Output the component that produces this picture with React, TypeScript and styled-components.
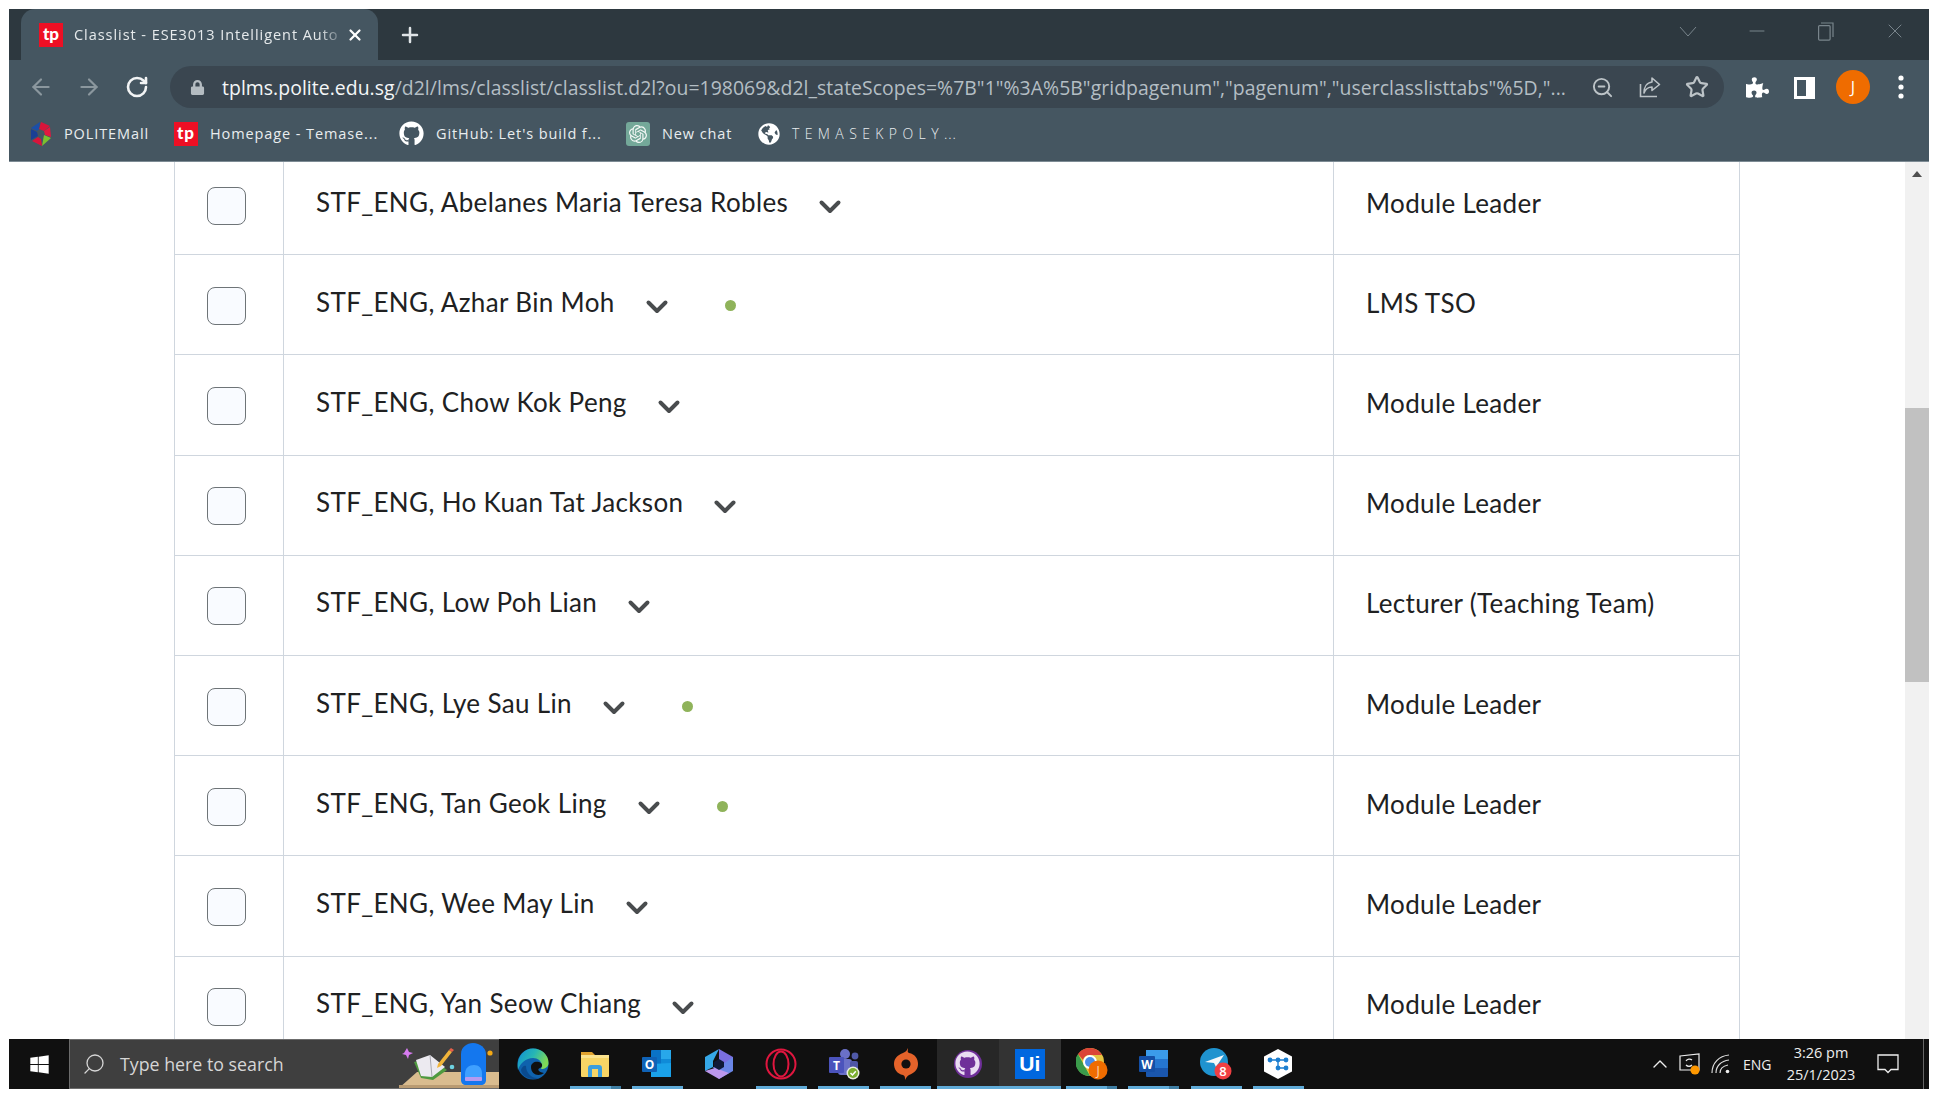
import React from 'react'
import styled, { createGlobalStyle } from 'styled-components'
import { ArrowLeft, ArrowRight, RotateCw, ZoomOut, Star, Search, ChevronUp, Plus, X, Minus } from 'lucide-react'
import { FaGithub, FaLock, FaPuzzlePiece, FaWindows, FaGlobeAmericas } from 'react-icons/fa'
import { SiOpenai } from 'react-icons/si'

const GlobalStyle = createGlobalStyle`
  html, body { margin: 0; padding: 0; background: #fff; overflow: hidden; }
  #root { padding: 9px; width: 1920px; height: 1080px; }
`

const Win = styled.div`
  width: 1920px;
  height: 1080px;
  display: flex;
  flex-direction: column;
  overflow: hidden;
  font-family: "Open Sans", "Liberation Sans", sans-serif;
`

const TitleBar = styled.div`
  height: 51px;
  flex-shrink: 0;
  background: #2d383f;
  display: flex;
  align-items: stretch;
  padding-left: 12px;
`
const Tab = styled.div`
  width: 357px;
  background: #455661;
  border-radius: 14px 14px 0 0;
  display: flex;
  align-items: center;
  padding: 0 14px 0 18px;
  box-sizing: border-box;
  color: #e6eaec;
`
const TabTitle = styled.span`
  flex: 1;
  margin-left: 11px;
  font-size: 14.5px;
  letter-spacing: 0.95px;
  white-space: nowrap;
  overflow: hidden;
  -webkit-mask-image: linear-gradient(to right, #000 90%, transparent 100%);
  mask-image: linear-gradient(to right, #000 90%, transparent 100%);
`
const NewTab = styled.div`
  width: 28px;
  margin-left: 18px;
  display: flex;
  align-items: center;
  justify-content: center;
  color: #dfe4e7;
`
const WindowControls = styled.div`
  margin-left: auto;
  display: flex;
  align-items: flex-start;
  color: #79858c;
`
const WindowControl = styled.div`
  width: 69px;
  height: 44px;
  display: flex;
  align-items: center;
  justify-content: center;
`

const AddressRow = styled.div`
  height: 48px;
  flex-shrink: 0;
  background: #455661;
  display: flex;
  align-items: center;
  padding: 6px 0 0 8px;
  box-sizing: border-box;
  color: #dfe4e7;
`
const NavButton = styled.div<{ $dim?: boolean }>`
  width: 48px;
  display: flex;
  justify-content: center;
  color: ${p => (p.$dim ? '#8b979e' : '#f2f4f5')};
`
const Omnibox = styled.div`
  margin-left: 9px;
  width: 1554px;
  height: 42px;
  flex-shrink: 0;
  border-radius: 21px;
  background: #3a4650;
  display: flex;
  align-items: center;
  padding-left: 20px;
  box-sizing: border-box;
  color: #b4bcc1;
`
const Url = styled.div`
  margin-left: 17px;
  width: 1357px;
  flex-shrink: 0;
  font-size: 19.4px;
  white-space: nowrap;
  color: #b4bec4;
  letter-spacing: 0.05px;
  b { font-weight: 400; color: #f4f6f7; }
`
const OmniIcon = styled.div`
  width: 47px;
  display: flex;
  justify-content: center;
  color: #bcc3c7;
`
const ToolIcon = styled.div`
  width: 48px;
  display: flex;
  justify-content: center;
  color: #fff;
`
const ExtensionSlot = styled(ToolIcon)`
  margin-left: 9px;
`
const Avatar = styled.div`
  width: 34px;
  height: 34px;
  border-radius: 50%;
  background: #ef6c00;
  color: #fff;
  font-size: 16px;
  display: flex;
  align-items: center;
  justify-content: center;
`

const BookmarkBar = styled.div`
  height: 54px;
  flex-shrink: 0;
  background: #455661;
  border-bottom: 1px solid #7d8b94;
  box-sizing: border-box;
  display: flex;
  align-items: center;
  padding: 0 0 2px 21px;
  color: #e9edef;
  font-size: 14.5px;
  letter-spacing: 0.9px;
`
const Bookmark = styled.div<{ $w: number }>`
  width: ${p => p.$w}px;
  display: flex;
  align-items: center;
  gap: 12px;
  white-space: nowrap;
  flex-shrink: 0;
`
const Spaced = styled.span`
  letter-spacing: 5.4px;
  font-size: 14px;
  font-weight: 300;
  i { font-style: normal; letter-spacing: 1px; }
`

const Main = styled.div`
  flex: 1;
  min-height: 0;
  display: flex;
  background: #fff;
`
const Page = styled.div`
  flex: 1;
  min-width: 0;
  overflow: hidden;
  padding-left: 165px;
`
const Table = styled.div`
  width: 1564px;
  margin-top: -7px;
  border-left: 1px solid #cfd6de;
  border-right: 1px solid #cfd6de;
  color: #202122;
  font-family: Lato, "Liberation Sans", sans-serif;
  font-size: 26px;
  letter-spacing: 0.35px;
`
const Row = styled.div`
  display: grid;
  grid-template-columns: 109px 1050px 1fr;
  height: 100.2px;
  box-sizing: border-box;
  border-bottom: 1px solid #cfd6de;
`
const CheckCell = styled.div`
  border-right: 1px solid #cfd6de;
  display: flex;
  align-items: center;
  padding: 2px 0 0 32px;
`
const CheckBox = styled.div`
  width: 39px;
  height: 38px;
  box-sizing: border-box;
  border: 1px solid #6e7477;
  border-radius: 8px;
  background: #f9fbff;
`
const NameCell = styled.div`
  border-right: 1px solid #cfd6de;
  display: flex;
  align-items: center;
  padding: 0 0 6px 32px;
`
const Caret = styled.svg`
  margin: 8px 0 0 30px;
  flex-shrink: 0;
`
const Presence = styled.span`
  width: 11px;
  height: 11px;
  margin: 8px 0 0 56px;
  border-radius: 50%;
  background: #8fb35a;
`
const RoleCell = styled.div`
  display: flex;
  align-items: center;
  padding: 0 0 4px 32px;
`

const Scrollbar = styled.div`
  width: 24px;
  background: #f1f1f1;
  display: flex;
  flex-direction: column;
  align-items: center;
`
const ScrollUp = styled.div`
  width: 0;
  height: 0;
  margin-top: 9px;
  border-left: 5px solid transparent;
  border-right: 5px solid transparent;
  border-bottom: 6px solid #505050;
`
const ScrollThumb = styled.div`
  width: 100%;
  height: 274px;
  margin-top: 231px;
  background: #c1c1c1;
`

const Taskbar = styled.div`
  height: 50px;
  flex-shrink: 0;
  background: #101010;
  display: flex;
  color: #e8e8e8;
`
const StartButton = styled.div`
  width: 60px;
  display: flex;
  align-items: center;
  justify-content: center;
  color: #fff;
`
const SearchBox = styled.div`
  width: 430px;
  background: #3f3f3f;
  border: 1px solid #6c6c6c;
  border-right: none;
  box-sizing: border-box;
  display: flex;
  align-items: center;
  padding-left: 12px;
  font-size: 17.8px;
  color: #d6d6d6;
  overflow: hidden;
`
const SearchGlass = styled(Search)`
  transform: scaleX(-1);
`
const SearchText = styled.span`
  margin-left: 14px;
`
const Illustration = styled.svg`
  margin-left: auto;
  flex-shrink: 0;
  align-self: flex-end;
`
const TaskIcons = styled.div`
  display: flex;
  margin-left: 3px;
`
const TaskCell = styled.div<{ $bg?: string }>`
  width: 62.1px;
  display: flex;
  flex-direction: column;
  align-items: center;
  background: ${p => p.$bg || 'transparent'};
`
const TaskGlyph = styled.div`
  flex: 1;
  display: flex;
  align-items: center;
  justify-content: center;
  padding-top: 2px;
`
const Runner = styled.div<{ $full?: boolean; $stacked?: boolean; $off?: boolean }>`
  width: ${p => (p.$full ? '100%' : '51px')};
  height: 3px;
  background: ${p =>
    p.$off
      ? 'transparent'
      : p.$stacked
        ? 'linear-gradient(to right, #60abd8 80%, #3f7ea3 80%)'
        : '#60abd8'};
`
const Tray = styled.div`
  margin-left: auto;
  display: flex;
  align-items: center;
  color: #eee;
`
const TrayIcon = styled.div<{ $w: number }>`
  width: ${p => p.$w}px;
  display: flex;
  justify-content: center;
`
const Lang = styled.div`
  width: 36px;
  margin-left: 7px;
  font-size: 14px;
`
const Clock = styled.div`
  width: 84px;
  text-align: center;
  font-size: 14.5px;
  line-height: 22px;
  white-space: nowrap;
`
const ShowDesktop = styled.div`
  width: 1px;
  align-self: stretch;
  background: #666;
  margin-left: 10px;
  margin-right: 5px;
`
const ChatTile = styled.span`
  width: 24px;
  height: 24px;
  border-radius: 3px;
  background: #74a899;
  display: flex;
  align-items: center;
  justify-content: center;
`
const GithubRing = styled.span`
  width: 28px;
  height: 28px;
  border-radius: 50%;
  background: #6f2f99;
  display: flex;
  align-items: center;
  justify-content: center;
`
const UiTile = styled.span`
  width: 30px;
  height: 30px;
  background: #0067df;
  color: #fff;
  font-family: "Liberation Sans", sans-serif;
  font-size: 21px;
  font-weight: 700;
  display: flex;
  align-items: center;
  justify-content: center;
`

const TpLogo = () => (
  <svg width="24" height="24" viewBox="0 0 24 24">
    <rect width="24" height="24" fill="#ee0f24" />
    <text x="12" y="17" textAnchor="middle" fontSize="17" fontWeight="900" fill="#fff" fontFamily="Lato, sans-serif">tp</text>
  </svg>
)

const PoliteMall = () => (
  <svg width="22" height="24" viewBox="0 0 22 24">
    <path d="M11 0L20 4L14 9L9 7Z" fill="#d8143a" />
    <path d="M20 5L21 15L15 13L14 9Z" fill="#e2183f" />
    <path d="M21 16L12 24L14 13Z" fill="#7cc02e" />
    <path d="M12 24L2 19L8 15L11 17Z" fill="#d8143a" />
    <path d="M1 18V7L7 10L8 14Z" fill="#1b3f94" />
    <path d="M1 6L10 0L9 7L7 9Z" fill="#1b4fa8" />
  </svg>
)

const ShareIcon = () => (
  <svg width="24" height="24" viewBox="0 0 24 24" fill="none" stroke="currentColor" strokeWidth="1.6">
    <path d="M2.5 9V21.5H19" />
    <path d="M14 3L21.5 9.5L14 15.5V12C10 12 7.5 14 6 18C6 12 9 7.5 14 7Z" strokeLinejoin="round" />
  </svg>
)

const SidePanel = () => (
  <svg width="22" height="24" viewBox="0 0 22 24">
    <path d="M0 2H21V24H0Z M3 5V21H12V5Z" fill="#fff" fillRule="evenodd" />
  </svg>
)

const Dots = () => (
  <svg width="8" height="26" viewBox="0 0 8 26" fill="#fff">
    <circle cx="4" cy="4" r="2.6" /><circle cx="4" cy="13" r="2.6" /><circle cx="4" cy="22" r="2.6" />
  </svg>
)

const RestoreIcon = () => (
  <svg width="16" height="19" viewBox="0 0 16 19" fill="none" stroke="currentColor" strokeWidth="1.2">
    <rect x="0.6" y="3.6" width="11.5" height="14.5" rx="1" />
    <path d="M3 1H15V15" />
  </svg>
)

const CaretIcon = () => (
  <Caret width="24" height="16" viewBox="0 0 24 16">
    <path d="M3.5 4.5L12 13L20.5 4.5" fill="none" stroke="#494c4e" strokeWidth="4" strokeLinecap="round" strokeLinejoin="round" />
  </Caret>
)

const EdgeIcon = () => (
  <svg width="32" height="32" viewBox="0 0 32 32">
    <defs>
      <linearGradient id="edgeTop" x1="0" y1="0" x2="1" y2="0.4">
        <stop offset="0" stopColor="#0f8ed6" /><stop offset="0.55" stopColor="#27b6b4" /><stop offset="1" stopColor="#7ed957" />
      </linearGradient>
    </defs>
    <circle cx="16" cy="16" r="15.5" fill="#0f62ad" />
    <path d="M16 .5C25 .5 31.5 7 31.5 15C31.5 19 28 21 24 21C27 15 22 10 16 10C9 10 3 15 1 22C-1 10 6 .5 16 .5Z" fill="url(#edgeTop)" />
    <path d="M14 19C14 15 18 13 22 14C26 15 26 19 23 20C20 21 21 24 27 25C22 29 14 27 14 19Z" fill="#101010" />
    <path d="M9 18C9 25 15 31 22 30C14 33 5 29 4 22C5 19 7 17 9 18Z" fill="#0a4a8e" />
  </svg>
)

const FolderIcon = () => (
  <svg width="30" height="30" viewBox="0 0 30 30">
    <path d="M1 3H12L15 6H1Z" fill="#e1a32f" />
    <rect x="1" y="6" width="28" height="22" rx="1" fill="#f7d565" />
    <path d="M1 6H29V9H1Z" fill="#fbe38e" />
    <path d="M8 28V19C8 17 9 16 11 16H19C21 16 22 17 22 19V28H18V20H12V28Z" fill="#3b9ede" />
  </svg>
)

const OutlookIcon = () => (
  <svg width="30" height="30" viewBox="0 0 30 30">
    <rect x="9" y="1" width="20" height="27" rx="1" fill="#0a73c6" />
    <rect x="19" y="1" width="10" height="9" fill="#28a8ea" />
    <rect x="19" y="10" width="10" height="9" fill="#0f8bd8" />
    <path d="M9 15L29 14V28H9Z" fill="#1aa1e8" />
    <rect x="0" y="8" width="15" height="15" rx="1" fill="#0f62b6" />
    <text x="7.5" y="20" textAnchor="middle" fontSize="12" fontWeight="700" fill="#fff" fontFamily="Open Sans, sans-serif">O</text>
  </svg>
)

const CopilotIcon = () => (
  <svg width="28" height="30" viewBox="0 0 28 30">
    <path d="M14 0L28 8V15H14Z" fill="#7a6ee0" />
    <path d="M14 0L0 8V22L8 18V12Z" fill="#35a7e6" />
    <path d="M28 8V22L14 30L8 18H14Z" fill="#6a86e6" />
    <path d="M0 22L14 30L24 24L10 19Z" fill="#bb97ec" />
    <path d="M14 10L19 13V18L14 21L9 18V13Z" fill="#101a38" />
  </svg>
)

const OperaIcon = () => (
  <svg width="32" height="32" viewBox="0 0 32 32" fill="none" stroke="#e0163f" strokeWidth="2">
    <circle cx="16" cy="16" r="14.5" />
    <ellipse cx="16" cy="16" rx="7.5" ry="12.5" />
  </svg>
)

const TeamsIcon = () => (
  <svg width="32" height="32" viewBox="0 0 32 32">
    <circle cx="17" cy="6" r="5" fill="#6a70c8" />
    <circle cx="27" cy="8" r="3.4" fill="#5059a8" />
    <rect x="10" y="11" width="14" height="16" rx="3" fill="#6a70c8" />
    <rect x="22" y="13" width="8" height="12" rx="2" fill="#4e56a6" />
    <rect x="1" y="9" width="15" height="16" rx="1" fill="#4b53bc" />
    <text x="8.5" y="22" textAnchor="middle" fontSize="12" fontWeight="700" fill="#fff" fontFamily="Open Sans, sans-serif">T</text>
    <circle cx="25" cy="25" r="6.5" fill="#e9ecdd" />
    <circle cx="25" cy="25" r="5" fill="#7cae2f" />
    <path d="M22.5 25L24.5 27L27.8 23.2" fill="none" stroke="#fff" strokeWidth="1.5" />
  </svg>
)

const OriginIcon = () => (
  <svg width="24" height="32" viewBox="0 0 24 32">
    <path d="M14 0C14 3 13 4 15 5C21 6 24 11 24 16C24 22 20 25 15 27C13 28 12 30 11 32C11 29 11 28 9 27C3 26 0 21 0 16C0 10 4 7 9 5C12 4 13 2 14 0Z" fill="#e5632a" />
    <circle cx="12" cy="16" r="4.6" fill="#101010" />
  </svg>
)

const ChromeIcon = () => (
  <svg width="32" height="32" viewBox="0 0 32 32">
    <circle cx="14" cy="14" r="14" fill="#e4c441" />
    <path d="M14 0A14 14 0 0 1 26 7H14A7 7 0 0 0 7 12L2 6A14 14 0 0 1 14 0Z" fill="#db4437" />
    <path d="M2 6L8 17L14 28A14 14 0 0 1 2 6Z" fill="#3a9b4b" />
    <circle cx="14" cy="14" r="7" fill="#fff" />
    <circle cx="14" cy="14" r="5" fill="#4a8ee8" />
    <circle cx="22" cy="22" r="9.5" fill="#ef6c00" />
    <text x="22" y="27" textAnchor="middle" fontSize="12" fill="#fbd9b5" fontFamily="Open Sans, sans-serif">J</text>
  </svg>
)

const WordIcon = () => (
  <svg width="30" height="30" viewBox="0 0 30 30">
    <rect x="7" y="1" width="22" height="27" rx="1" fill="#1a56ad" />
    <rect x="7" y="1" width="22" height="9" fill="#3b9bea" />
    <rect x="7" y="10" width="22" height="9" fill="#2575cf" />
    <rect x="0" y="7" width="16" height="16" rx="1" fill="#144fa6" />
    <text x="8" y="19.5" textAnchor="middle" fontSize="12" fontWeight="700" fill="#fff" fontFamily="Open Sans, sans-serif">W</text>
  </svg>
)

const TelegramIcon = () => (
  <svg width="32" height="32" viewBox="0 0 32 32">
    <circle cx="14" cy="14" r="14" fill="#1f93cf" />
    <path d="M5 14L24 7L16 19L14 15Z" fill="#f4f8fa" />
    <circle cx="23" cy="23" r="8.5" fill="#ef3f42" />
    <text x="23" y="28" textAnchor="middle" fontSize="13" fontWeight="600" fill="#fff" fontFamily="Open Sans, sans-serif">8</text>
  </svg>
)

const NodesIcon = () => (
  <svg width="28" height="30" viewBox="0 0 28 30">
    <path d="M14 0L28 7.5V22.5L14 30L0 22.5V7.5Z" fill="#fff" />
    <g fill="#1d7fd0">
      <circle cx="6" cy="11" r="2.4" /><circle cx="14" cy="11" r="2.4" /><circle cx="22" cy="11" r="2.4" />
      <circle cx="14" cy="19" r="2.4" /><circle cx="22" cy="19" r="2.4" />
    </g>
    <path d="M6 11H22M14 11V19H22" stroke="#1d7fd0" strokeWidth="1.4" fill="none" />
  </svg>
)

const SearchArt = () => (
  <Illustration width="100" height="48" viewBox="0 0 100 48">
    <path d="M5 13L8 8L10 12L14 13L10 15L9 19L7 15L3 14Z" fill="#d77bf0" />
    <path d="M0 48L18 32H100V48Z" fill="#d9bc8f" />
    <rect y="45" width="100" height="3" fill="#b99b72" />
    <path d="M15 22L32 18L48 30L34 40L22 38Z" fill="#4f9a3f" />
    <path d="M17 20L31 15L46 27L33 37L22 36Z" fill="#eceaf0" />
    <path d="M31 15L33 37" stroke="#a8a8b0" />
    <path d="M39 24L50 10L53 12L42 26L38 28Z" fill="#f2b53a" />
    <path d="M50 10L52 8L55 10L53 12Z" fill="#e8604a" />
    <circle cx="53" cy="27" r="2.3" fill="#6ed2e0" />
    <path d="M62 14C62 7 68 3 74 3C81 3 87 8 87 14V40C87 43 85 45 82 45H67C64 45 62 43 62 40Z" fill="#1477ee" />
    <path d="M66 34C66 28 70 25 75 25C80 25 83 28 83 34V38H66Z" fill="#3fa0ff" />
    <rect x="66" y="37" width="17" height="4" rx="1" fill="#b59af0" />
    <circle cx="91" cy="13" r="2.6" fill="#f4a914" />
  </Illustration>
)

const AlertTray = () => (
  <svg width="22" height="22" viewBox="0 0 22 22" fill="none" stroke="#eee" strokeWidth="1.2">
    <path d="M1 3L20 1V17H1Z" />
    <path d="M7 8A4 4 0 0 1 13 7M13 12A4 4 0 0 1 7 12" />
    <circle cx="16" cy="17" r="4.6" fill="#ff9800" stroke="none" />
  </svg>
)

const WifiTray = () => (
  <svg width="20" height="20" viewBox="0 0 20 20" fill="none" stroke="#ddd" strokeWidth="1.2">
    <path d="M1 19C1 9 8 2 18 1" />
    <path d="M5 19C5 12 10 7 18 6" />
    <path d="M9 19C9 15 12 12 17 11" />
    <circle cx="16.5" cy="17.5" r="1.8" fill="#eee" stroke="none" />
  </svg>
)

const ActionCenter = () => (
  <svg width="22" height="20" viewBox="0 0 22 20" fill="none" stroke="#eee" strokeWidth="1.3">
    <path d="M1 1H21V15.5H14L11 18.5L8 15.5H1Z" />
  </svg>
)

const people: { name: string; role: string; online?: boolean }[] = [
  { name: 'STF_ENG, Abelanes Maria Teresa Robles', role: 'Module Leader' },
  { name: 'STF_ENG, Azhar Bin Moh', role: 'LMS TSO', online: true },
  { name: 'STF_ENG, Chow Kok Peng', role: 'Module Leader' },
  { name: 'STF_ENG, Ho Kuan Tat Jackson', role: 'Module Leader' },
  { name: 'STF_ENG, Low Poh Lian', role: 'Lecturer (Teaching Team)' },
  { name: 'STF_ENG, Lye Sau Lin', role: 'Module Leader', online: true },
  { name: 'STF_ENG, Tan Geok Ling', role: 'Module Leader', online: true },
  { name: 'STF_ENG, Wee May Lin', role: 'Module Leader' },
  { name: 'STF_ENG, Yan Seow Chiang', role: 'Module Leader' },
]

const taskApps: { icon: React.ReactNode; bg?: string; full?: boolean; stacked?: boolean; off?: boolean }[] = [
  { icon: <EdgeIcon />, off: true },
  { icon: <FolderIcon />, stacked: true },
  { icon: <OutlookIcon /> },
  { icon: <CopilotIcon />, off: true },
  { icon: <OperaIcon /> },
  { icon: <TeamsIcon /> },
  { icon: <OriginIcon /> },
  { icon: <GithubRing><FaGithub size={25} color="#e9dcf2" /></GithubRing>, bg: '#272727', full: true },
  { icon: <UiTile>Ui</UiTile>, bg: '#333333', full: true },
  { icon: <ChromeIcon />, stacked: true },
  { icon: <WordIcon />, stacked: true },
  { icon: <TelegramIcon /> },
  { icon: <NodesIcon /> },
]

export default function App() {
  return (
    <>
      <GlobalStyle />
      <Win>
        <TitleBar>
          <Tab>
            <TpLogo />
            <TabTitle>Classlist - ESE3013 Intelligent Auto</TabTitle>
            <X size={18} strokeWidth={3} color="#fff" />
          </Tab>
          <NewTab><Plus size={24} strokeWidth={2.5} /></NewTab>
          <WindowControls>
            <WindowControl>
              <svg width="18" height="11" viewBox="0 0 18 11" fill="none" stroke="currentColor"><path d="M1 1L9 10L17 1" /></svg>
            </WindowControl>
            <WindowControl><Minus size={24} strokeWidth={1} /></WindowControl>
            <WindowControl><RestoreIcon /></WindowControl>
            <WindowControl><X size={24} strokeWidth={1} /></WindowControl>
          </WindowControls>
        </TitleBar>

        <AddressRow>
          <NavButton $dim><ArrowLeft size={26} strokeWidth={2} /></NavButton>
          <NavButton $dim><ArrowRight size={26} strokeWidth={2} /></NavButton>
          <NavButton><RotateCw size={24} strokeWidth={2.6} /></NavButton>
          <Omnibox>
            <FaLock size={15} />
            <Url>
              <b>tplms.polite.edu.sg</b>/d2l/lms/classlist/classlist.d2l?ou=198069&amp;d2l_stateScopes=%7B"1"%3A%5B"gridpagenum","pagenum","userclasslisttabs"%5D,"...
            </Url>
            <OmniIcon><ZoomOut size={23} strokeWidth={2} /></OmniIcon>
            <OmniIcon><ShareIcon /></OmniIcon>
            <OmniIcon><Star size={24} strokeWidth={2.2} /></OmniIcon>
          </Omnibox>
          <ExtensionSlot><FaPuzzlePiece size={23} /></ExtensionSlot>
          <ToolIcon><SidePanel /></ToolIcon>
          <ToolIcon><Avatar>J</Avatar></ToolIcon>
          <ToolIcon><Dots /></ToolIcon>
        </AddressRow>

        <BookmarkBar>
          <Bookmark $w={144}><PoliteMall />POLITEMall</Bookmark>
          <Bookmark $w={225}><TpLogo />Homepage - Temase...</Bookmark>
          <Bookmark $w={227}><FaGithub size={25} color="#fff" />GitHub: Let's build f...</Bookmark>
          <Bookmark $w={132}><ChatTile><SiOpenai size={18} color="#f4f8f6" /></ChatTile>New chat</Bookmark>
          <Bookmark $w={220}><FaGlobeAmericas size={22} color="#fff" /><Spaced>TEMASEKPOLY<i>...</i></Spaced></Bookmark>
        </BookmarkBar>

        <Main>
          <Page>
            <Table>
              {people.map(p => (
                <Row key={p.name}>
                  <CheckCell><CheckBox /></CheckCell>
                  <NameCell>
                    {p.name}
                    <CaretIcon />
                    {p.online && <Presence />}
                  </NameCell>
                  <RoleCell>{p.role}</RoleCell>
                </Row>
              ))}
            </Table>
          </Page>
          <Scrollbar>
            <ScrollUp />
            <ScrollThumb />
          </Scrollbar>
        </Main>

        <Taskbar>
          <StartButton><FaWindows size={21} /></StartButton>
          <SearchBox>
            <SearchGlass size={24} strokeWidth={1.3} />
            <SearchText>Type here to search</SearchText>
            <SearchArt />
          </SearchBox>
          <TaskIcons>
            {taskApps.map((a, i) => (
              <TaskCell key={i} $bg={a.bg}>
                <TaskGlyph>{a.icon}</TaskGlyph>
                <Runner $full={a.full} $stacked={a.stacked} $off={a.off} />
              </TaskCell>
            ))}
          </TaskIcons>
          <Tray>
            <TrayIcon $w={28}><ChevronUp size={24} strokeWidth={1.4} /></TrayIcon>
            <TrayIcon $w={32}><AlertTray /></TrayIcon>
            <TrayIcon $w={30}><WifiTray /></TrayIcon>
            <Lang>ENG</Lang>
            <Clock>3:26 pm<br />25/1/2023</Clock>
            <TrayIcon $w={50}><ActionCenter /></TrayIcon>
            <ShowDesktop />
          </Tray>
        </Taskbar>
      </Win>
    </>
  )
}
